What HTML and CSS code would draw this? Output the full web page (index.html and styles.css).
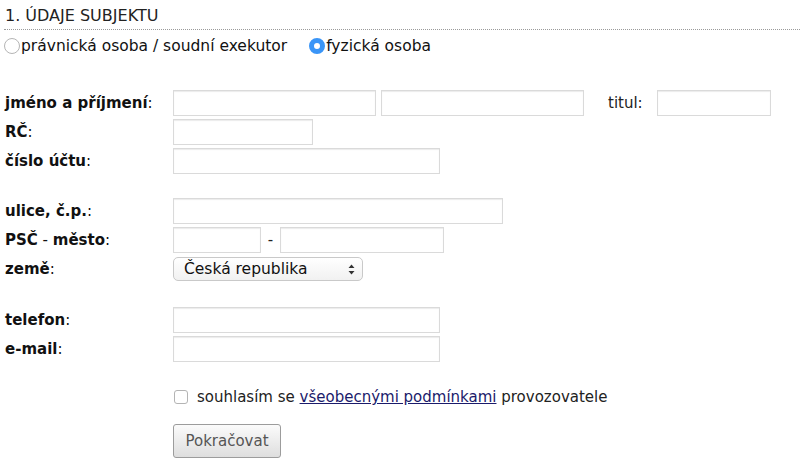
FILE: index.html
```html
<!DOCTYPE html>
<html lang="cs">
<head>
<meta charset="utf-8">
<title>Údaje subjektu</title>
<link rel="stylesheet" href="styles.css">
</head>
<body>
<div class="page">
  <h2 class="section-title">1. ÚDAJE SUBJEKTU</h2>
  <div class="type-choice">
    <label class="choice"><input type="radio" name="typ" class="radio">právnická osoba / soudní exekutor</label>
    <label class="choice"><input type="radio" name="typ" class="radio" checked>fyzická osoba</label>
  </div>

  <form class="form">
    <div class="group">
      <div class="row">
        <label class="lbl"><b>jméno a příjmení</b>:</label>
        <input class="field w203" type="text">
        <input class="field w203 ml5" type="text">
        <span class="titul">titul:</span>
        <input class="field w114" type="text">
      </div>
      <div class="row">
        <label class="lbl"><b>RČ</b>:</label>
        <input class="field w140" type="text">
      </div>
      <div class="row">
        <label class="lbl"><b>číslo účtu</b>:</label>
        <input class="field w267" type="text">
      </div>
    </div>

    <div class="group group-addr">
      <div class="row">
        <label class="lbl"><b>ulice, č.p.</b>:</label>
        <input class="field w330" type="text">
      </div>
      <div class="row">
        <label class="lbl"><b>PSČ</b> - <b>město</b>:</label>
        <input class="field w88" type="text">
        <span class="dash">-</span>
        <input class="field w164" type="text">
      </div>
      <div class="row">
        <label class="lbl"><b>země</b>:</label>
        <div class="select">
          <span>Česká republika</span>
          <svg class="arrows" width="7" height="11" viewBox="0 0 7 11"><path d="M3.5 0.5 L6.5 4 H0.5 Z M3.5 10.5 L6.5 7 H0.5 Z" fill="#333"/></svg>
        </div>
      </div>
    </div>

    <div class="group">
      <div class="row">
        <label class="lbl"><b>telefon</b>:</label>
        <input class="field w267" type="text">
      </div>
      <div class="row">
        <label class="lbl"><b>e-mail</b>:</label>
        <input class="field w267" type="text">
      </div>
    </div>

    <div class="agree">
      <span class="check"></span>
      <span>souhlasím se <a href="#" class="link">všeobecnými podmínkami</a> provozovatele</span>
    </div>
    <div class="actions">
      <button type="button" class="btn">Pokračovat</button>
    </div>
  </form>
</div>
</body>
</html>
```
FILE: styles.css
```css
html, body {
  margin: 0;
  padding: 0;
  background: #fff;
}
body {
  font-family: "DejaVu Sans", Verdana, sans-serif;
  font-size: 14px;
  color: #111;
}
.page {
  padding: 0 0 0 4px;
}
.section-title {
  margin: 0;
  padding: 7px 0 4px 1px;
  font-size: 16px;
  font-weight: normal;
  line-height: 18px;
  color: #222;
  border-bottom: 1px dotted #9a9a9a;
}
.type-choice {
  display: flex;
  align-items: center;
  gap: 22px;
  height: 32px;
  font-size: 15.5px;
  color: #111;
}
.choice {
  display: flex;
  align-items: center;
}
.radio {
  appearance: none;
  -webkit-appearance: none;
  margin: 0 1px 0 0;
  width: 16px;
  height: 16px;
  border-radius: 50%;
  border: 1px solid #b5b5b5;
  background: #fff;
  box-sizing: border-box;
}
.radio:checked {
  border: 5px solid #3a95f7;
  background: #fff;
}
.form {
  padding-top: 28px;
}
.group {
  display: flex;
  flex-direction: column;
  gap: 3px;
  margin-bottom: 24px;
}
.group-addr {
  margin-bottom: 25px;
}
.row {
  display: flex;
  align-items: center;
  height: 26px;
}
.lbl {
  width: 168px;
  flex: none;
  padding-left: 1px;
  font-size: 15px;
  color: #111;
}
.lbl b {
  font-weight: bold;
}
.field {
  box-sizing: border-box;
  height: 26px;
  margin: 0;
  border: 1px solid #dadada;
  box-shadow: inset 0 1px 1px #ececec;
  background: #fff;
  padding: 0 4px;
  font: inherit;
}
.w203 { width: 203px; }
.w114 { width: 114px; }
.w140 { width: 140px; }
.w267 { width: 267px; }
.w330 { width: 330px; }
.w88 { width: 88px; }
.w164 { width: 164px; }
.ml5 { margin-left: 5px; }
.titul {
  margin-left: 24px;
  width: 49px;
  font-size: 15px;
  color: #222;
}
.dash {
  width: 19px;
  text-align: center;
  font-size: 15px;
  color: #222;
}
.select {
  box-sizing: border-box;
  width: 190px;
  height: 24px;
  display: flex;
  align-items: center;
  justify-content: space-between;
  padding: 0 7px 0 10px;
  border: 1px solid #c9c9c9;
  border-radius: 5px;
  background: linear-gradient(#ffffff, #f1f1f1);
  font-size: 15.5px;
  color: #111;
}
.arrows {
  display: block;
}
.agree {
  display: flex;
  align-items: center;
  gap: 9px;
  margin: 26px 0 0 170px;
  font-size: 15px;
  color: #222;
}
.check {
  box-sizing: border-box;
  width: 14px;
  height: 14px;
  border: 1px solid #b4b4b4;
  border-radius: 3px;
  background: #fff;
}
.link {
  color: #1b1b6b;
  text-decoration: underline;
}
.actions {
  margin: 18px 0 0 169px;
}
.btn {
  box-sizing: border-box;
  width: 108px;
  height: 34px;
  border: 1px solid #9c9c9c;
  border-radius: 3px;
  background: linear-gradient(#fbfbfb, #dedede);
  font-family: "DejaVu Sans", Verdana, sans-serif;
  font-size: 15px;
  color: #555;
  padding: 0;
}
```
